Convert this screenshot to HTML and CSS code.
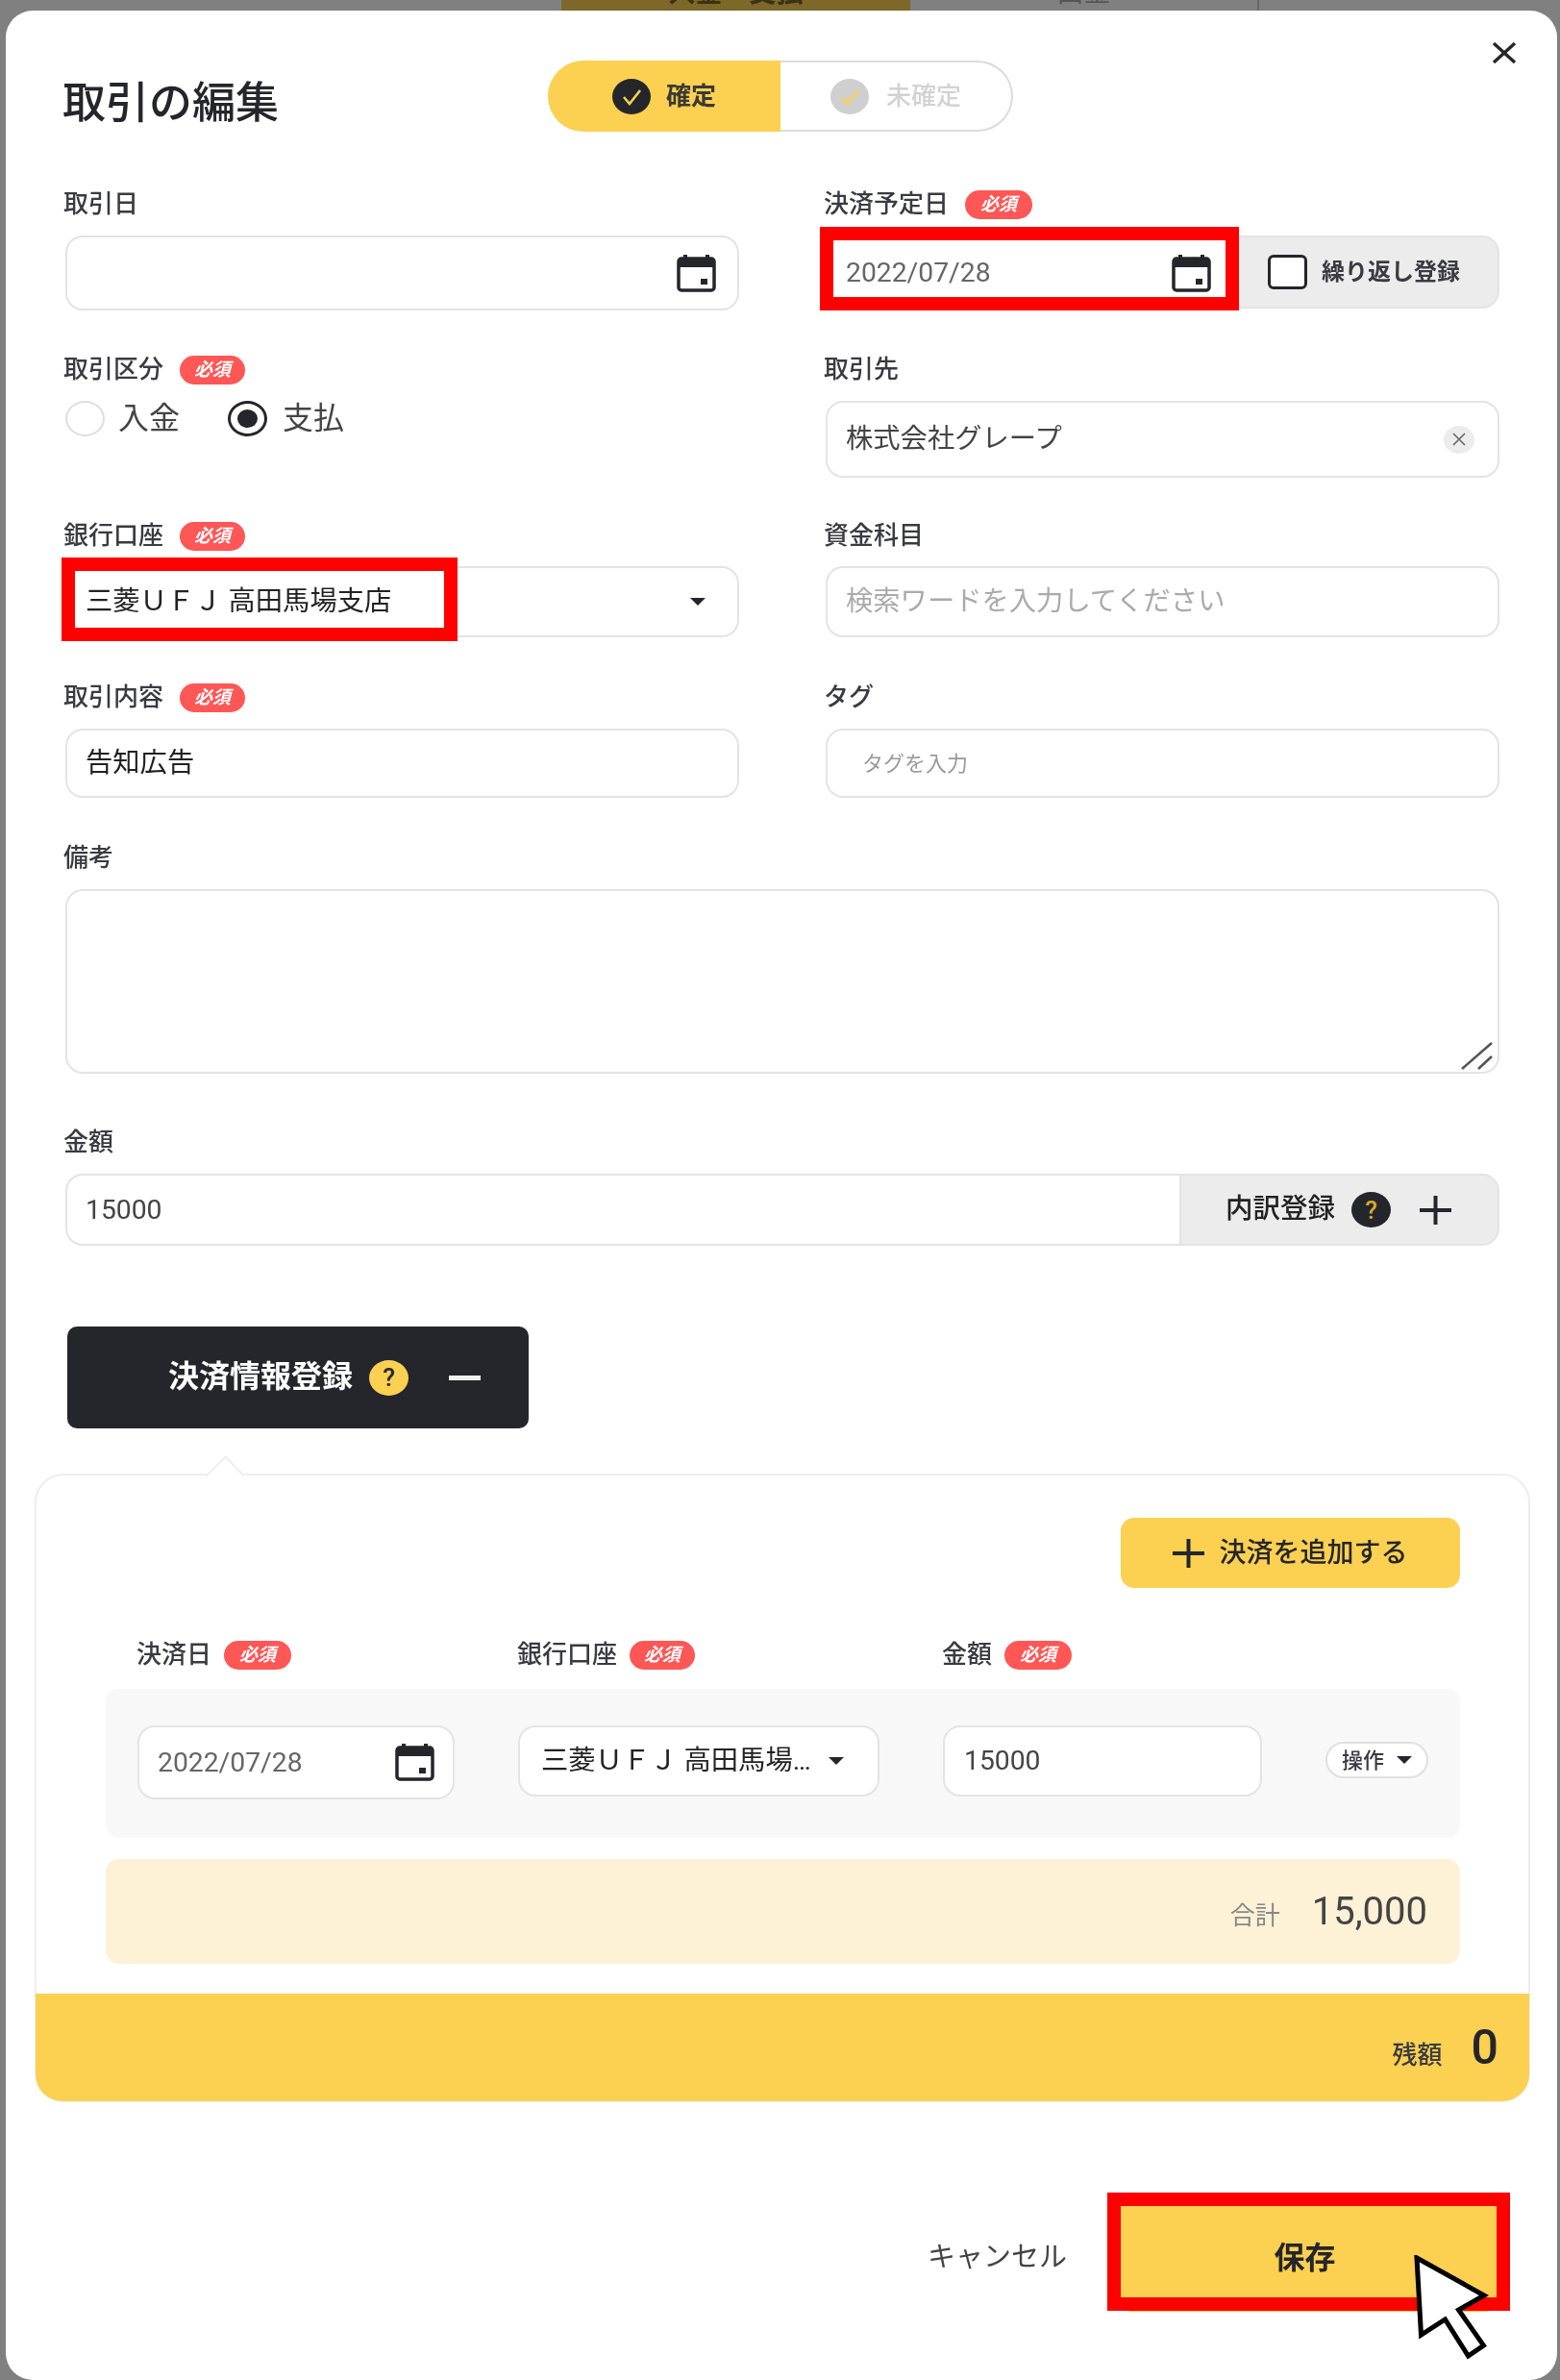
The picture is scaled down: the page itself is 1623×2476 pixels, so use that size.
FILE: index.html
```html
<!DOCTYPE html>
<html lang="ja">
<head>
<meta charset="utf-8">
<title>取引の編集</title>
<link rel="stylesheet" href="styles.css">
</head>
<body>
<svg class="sprite" aria-hidden="true">
  <symbol id="cal" viewBox="0 0 41 39" preserveAspectRatio="none">
    <path d="M7 0h4v5H7zM30 0h4v5h-4z" fill="#25262b"/>
    <rect x="2" y="4" width="37" height="33" rx="3" fill="none" stroke="#25262b" stroke-width="3.5"/>
    <rect x="2" y="4" width="37" height="9" fill="#25262b"/>
    <rect x="25" y="25" width="7" height="6" fill="#25262b"/>
  </symbol>
  <symbol id="check" viewBox="0 0 40 37" preserveAspectRatio="none">
    <path d="M12 19l6 7 11-14" fill="none" stroke="currentColor" stroke-width="2.6"/>
  </symbol>
  <symbol id="plus" viewBox="0 0 33 30" preserveAspectRatio="none">
    <path d="M14.5 0h4v13H33v4H18.500v13h-4V17H0v-4h14.500z" fill="#25262b"/>
  </symbol>
</svg>

<div class="strip">
  <div class="strip-tab"><span class="strip-text">入金・支払</span></div>
  <div class="strip-other"><span class="strip-text">出金</span></div>
</div>

<main class="modal">
  <svg class="close" viewBox="0 0 26 22" preserveAspectRatio="none"><path d="M2 1l22 20M24 1L2 21" fill="none" stroke="#25262b" stroke-width="3.4"/></svg>

  <header class="head">
    <h1 class="title">取引の編集</h1>
    <div class="toggle">
      <div class="toggle-on">
        <span class="tick tick-on"><svg class="tick-svg"><use href="#check"/></svg></span>
        <span class="toggle-text">確定</span>
      </div>
      <div class="toggle-off">
        <span class="tick tick-off"><svg class="tick-svg"><use href="#check"/></svg></span>
        <span class="toggle-text toggle-text-off">未確定</span>
      </div>
    </div>
  </header>

  <div class="row row-1">
    <div class="field">
      <div class="label">取引日</div>
      <div class="box box-78"><span class="grow"></span><svg class="cal cal-wide"><use href="#cal"/></svg></div>
    </div>
    <div class="field">
      <div class="label">決済予定日<span class="req req-wide">必須</span></div>
      <div class="joined">
        <div class="box box-78 box-date">
          <span class="grow val-gray">2022/07/28</span><svg class="cal"><use href="#cal"/></svg>
          <span class="mark mark-date"></span>
        </div>
        <div class="repeat"><span class="checkbox"></span><span class="repeat-text">繰り返し登録</span></div>
      </div>
    </div>
  </div>

  <div class="row row-2">
    <div class="field">
      <div class="label">取引区分<span class="req">必須</span></div>
      <div class="radios">
        <span class="radio"></span><span class="radio-text">入金</span>
        <span class="radio radio-on"></span><span class="radio-text">支払</span>
      </div>
    </div>
    <div class="field">
      <div class="label">取引先</div>
      <div class="box box-80">
        <span class="grow val-dim">株式会社グレープ</span>
        <span class="clear"><svg class="clear-x" viewBox="0 0 14 14"><path d="M1 1l12 12M13 1L1 13" fill="none" stroke="#666" stroke-width="1.6"/></svg></span>
      </div>
    </div>
  </div>

  <div class="row row-3">
    <div class="field">
      <div class="label">銀行口座<span class="req">必須</span></div>
      <div class="box box-74 box-bank">
        <span class="grow val-dark">三菱ＵＦＪ 高田馬場支店</span><span class="caret"></span>
        <span class="mark mark-bank"></span>
      </div>
    </div>
    <div class="field">
      <div class="label">資金科目</div>
      <div class="box box-74"><span class="grow val-ph">検索ワードを入力してください</span></div>
    </div>
  </div>

  <div class="row row-4">
    <div class="field">
      <div class="label">取引内容<span class="req">必須</span></div>
      <div class="box box-72"><span class="grow val-dark">告知広告</span></div>
    </div>
    <div class="field">
      <div class="label">タグ</div>
      <div class="box box-72 box-tag"><span class="grow val-tag">タグを入力</span></div>
    </div>
  </div>

  <div class="row-full row-5">
    <div class="label">備考</div>
    <div class="notes">
      <svg class="resize" viewBox="0 0 33 29"><path d="M1 28L32 1M18 28L32 15" fill="none" stroke="#555" stroke-width="2.6"/></svg>
    </div>
  </div>

  <div class="row-full row-6">
    <div class="label">金額</div>
    <div class="joined joined-amount">
      <div class="box box-75 box-amount"><span class="grow val-dim">15000</span></div>
      <div class="detail">
        <span class="detail-text">内訳登録</span>
        <span class="help help-dark">?</span>
        <svg class="plus"><use href="#plus"/></svg>
      </div>
    </div>
  </div>

  <div class="pay-btn">
    <span class="pay-text">決済情報登録</span>
    <span class="help help-yellow">?</span>
    <span class="minus"></span>
  </div>

  <section class="panel">
    <div class="panel-body">
      <div class="add-row">
        <div class="add-btn"><svg class="plus"><use href="#plus"/></svg><span class="add-text">決済を追加する</span></div>
      </div>
      <div class="pay-grid pay-head">
        <div class="label">決済日<span class="req req-wide req-near">必須</span></div>
        <div class="label">銀行口座<span class="req req-near">必須</span></div>
        <div class="label">金額<span class="req req-wide req-near">必須</span></div>
        <div></div>
      </div>
      <div class="pay-grid pay-row">
        <div class="box box-77 box-date-small"><span class="grow val-gray">2022/07/28</span><svg class="cal"><use href="#cal"/></svg></div>
        <div class="box box-74 box-select-small"><span class="grow val-dark">三菱ＵＦＪ 高田馬場…</span><span class="caret"></span></div>
        <div class="box box-74 box-amount-small"><span class="grow val-dim">15000</span></div>
        <div class="ops"><span class="ops-text">操作</span><span class="caret"></span></div>
      </div>
      <div class="total">
        <span class="total-label">合計</span><span class="total-value">15,000</span>
      </div>
    </div>
    <div class="balance">
      <span class="balance-label">残額</span><span class="balance-value">0</span>
    </div>
  </section>

  <footer class="foot">
    <span class="cancel">キャンセル</span>
    <div class="save"><span class="save-text">保存</span><span class="mark mark-save"></span>
      <svg class="cursor" viewBox="0 0 80 110"><path d="M3 3L73 42 46.500 57 72.500 94 56.500 105 32.500 67 7.500 83z" fill="#fff" stroke="#000" stroke-width="5"/></svg>
    </div>
  </footer>
</main>
</body>
</html>
```

FILE: styles.css
```css
* { box-sizing: border-box; }
html, body { margin: 0; padding: 0; }
body {
  width: 1623px;
  height: 2476px;
  overflow: hidden;
  background: #808080;
  font-family: Roboto, "Noto Sans CJK JP", sans-serif;
  color: #25262b;
  position: relative;
}
.sprite { position: absolute; width: 0; height: 0; }

/* the screenshot is an enlarged capture: its text is slightly soft */
.title, .label, .grow, .toggle-text, .repeat-text, .radio-text, .detail-text,
.pay-text, .add-text, .ops-text, .total-label, .total-value, .balance-label,
.balance-value, .cancel, .save-text, .strip-text { filter: blur(.5px); }

.strip { height: 11px; display: flex; overflow: hidden; padding-left: 584px; }
.strip-tab { width: 363px; height: 11px; background: #7d6729; text-align: center; }
.strip-other { width: 363px; height: 11px; border-right: 2px solid #666; text-align: center; }
.strip-text { display: block; font-size: 28px; line-height: 28px; margin-top: -21px; font-weight: 700; color: #3b3215; }
.strip-other .strip-text { color: #555; font-weight: 400; }

.modal {
  position: relative;
  width: 1614px;
  height: 2465px;
  margin-left: 6px;
  background: #fff;
  border-radius: 28px;
  padding: 52px 60px 0 62px;
}
.close { position: absolute; left: 1546px; top: 33px; width: 26px; height: 22px; }

.head { display: flex; align-items: flex-start; height: 74px; }
.title { margin: 0 3px 0 -3px; width: 502px; padding-top: 23px; font-size: 45px; line-height: 44px; font-weight: 500; color: #25262b; white-space: nowrap; }
.toggle { display: flex; width: 484px; height: 74px; }
.toggle-on, .toggle-off { display: flex; align-items: center; justify-content: center; }
.toggle-on { width: 242px; background: #fcd051; border-radius: 37px 0 0 37px; gap: 16px; }
.toggle-off { width: 242px; background: #fff; border: 2px solid #dcdcdc; border-left: 0; border-radius: 0 37px 37px 0; gap: 18px; }
.tick { width: 40px; height: 37px; border-radius: 50%; display: block; color: #fcd051; }
.tick-on { background: #25262b; }
.tick-off { background: #cfcfcf; }
.tick-svg { width: 40px; height: 37px; display: block; }
.toggle-text { font-size: 26px; line-height: 30px; font-weight: 700; color: #3a3a34; }
.toggle-text-off { color: #d2d2d2; font-weight: 500; }

.row { display: grid; grid-template-columns: 701px 701px; column-gap: 90px; }
.row-1 { margin-top: 59px; }
.row-2 { margin-top: 45px; }
.row-3 { margin-top: 44px; }
.row-4 { margin-top: 46px; }
.row-5 { margin-top: 46px; }
.row-6 { margin-top: 55px; }

.label { height: 30px; margin-bottom: 19px; margin-left: -2px; padding-top: 3px; font-size: 26px; line-height: 27px; font-weight: 500; color: #3a3b40; display: flex; align-items: center; white-space: nowrap; }
.row-3 .label { margin-bottom: 18px; }
.req { display: inline-block; flex: none; width: 68px; height: 30px; margin-left: 17px; margin-top: 1px; border-radius: 15px; background: #ff5656; color: #fff; font-size: 19px; line-height: 29px; font-weight: 700; font-style: italic; text-align: center; }
.req-wide { width: 70px; }
.req-near { margin-left: 13px; }

.box { position: relative; display: flex; align-items: center; background: #fff; border: 2px solid #e4e4e4; border-radius: 18px; padding: 0 20px; }
.box-72 { height: 72px; }
.box-74 { height: 74px; }
.box-75 { height: 75px; }
.box-77 { height: 77px; }
.box-78 { height: 78px; }
.box-80 { height: 80px; }
.grow { flex: 1; min-width: 0; font-size: 28.300px; line-height: 34px; white-space: nowrap; margin-left: -1px; }
.val-gray { color: #666; }
.val-dim { color: #444; }
.val-dark { color: #222; }
.val-ph { color: #aaa; }
.val-tag { color: #999; font-size: 22px; padding-left: 17px; padding-top: 2px; }
.cal { width: 41px; height: 39px; display: block; flex: none; }
.cal-wide { margin-right: 2px; }
.box-date .cal { margin-right: 9px; }
.caret { flex: none; width: 0; height: 0; border-left: 8px solid transparent; border-right: 8px solid transparent; border-top: 8px solid #25262b; }
.box-bank .caret { margin-right: 13px; }
.box-select-small .caret { margin-right: 27px; margin-left: 4px; }

.mark { position: absolute; border: 14px solid #f00; pointer-events: none; }
.mark-date { left: -8px; top: -11px; width: 436px; height: 87px; }
.mark-bank { left: -6px; top: -11px; width: 412px; height: 87px; }

.joined { display: flex; }
.box-date { width: 430px; border-radius: 18px 0 0 18px; border-right: 0; }
.repeat { flex: 1; height: 76px; display: flex; align-items: center; background: #ececec; border: 2px solid #e4e4e4; border-left: 0; border-radius: 0 18px 18px 0; padding-left: 30px; gap: 15px; }
.checkbox { width: 41px; height: 36px; border: 3px solid #25262b; border-radius: 6px; background: #fff; display: block; }
.repeat-text { font-size: 24px; line-height: 30px; font-weight: 700; color: #3a3b40; }

.radios { display: flex; align-items: center; height: 37px; margin-top: 1px; }
.radio { width: 41px; height: 37px; border-radius: 50%; border: 2px solid #dedede; display: block; background: #fff; }
.radio-on { border: 3px solid #25262b; position: relative; margin-left: 50px; }
.radio-on::after { content: ""; position: absolute; left: 7px; top: 6px; width: 21px; height: 19px; border-radius: 50%; background: #25262b; }
.radio-text { font-size: 32px; line-height: 37px; color: #444; margin-left: 14px; }
.radio-on + .radio-text { margin-left: 16px; }

.clear { flex: none; width: 32px; height: 29px; border-radius: 50%; background: #ececec; display: flex; align-items: center; justify-content: center; margin-right: 4px; }
.clear-x { width: 14px; height: 14px; display: block; }

.notes { position: relative; height: 192px; border: 2px solid #e4e4e4; border-radius: 18px; background: #fff; }
.resize { position: absolute; right: 5px; bottom: 2px; width: 33px; height: 29px; }

.joined-amount { width: 1492px; }
.box-amount { width: 1159px; border-radius: 18px 0 0 18px; border-right: 0; }
.detail { flex: 1; height: 75px; display: flex; align-items: center; background: #ececec; border: 2px solid #e4e4e4; border-radius: 0 18px 18px 0; padding-left: 46px; }
.detail-text { font-size: 28.500px; line-height: 34px; font-weight: 500; color: #222; margin-top: -2px; }
.help { width: 41px; height: 37px; border-radius: 50%; display: flex; align-items: center; justify-content: center; font-size: 26px; font-weight: 500; flex: none; }
.help-dark { background: #25262b; color: #d6a92f; margin-left: 17px; }
.help-yellow { background: #fcd051; color: #25262b; }
.plus { width: 33px; height: 30px; display: block; flex: none; }
.detail .plus { margin-left: 30px; }

.pay-btn { display: flex; align-items: center; width: 480px; height: 106px; margin-top: 84px; margin-left: 2px; background: #25262b; border-radius: 10px; padding-left: 105px; }
.pay-text { font-size: 32px; line-height: 40px; font-weight: 700; color: #fff; white-space: nowrap; margin-top: -2px; }
.pay-btn .help { margin-left: 17px; }
.minus { width: 33px; height: 5px; background: #f2f2f2; margin-left: 42px; display: block; }

.panel { position: relative; width: 1556px; height: 654px; margin-top: 47px; margin-left: -32px; border: 2px solid #eee; border-radius: 30px; background: #fff; display: flex; flex-direction: column; }
.panel::before { content: ""; position: absolute; left: 181px; top: -15px; width: 28px; height: 28px; background: #fff; border-left: 2px solid #eee; border-top: 2px solid #eee; transform: rotate(45deg) scaleX(.95); }
.panel-body { flex: 1; padding: 44px 71px 0 72px; position: relative; }
.add-row { display: flex; justify-content: flex-end; }
.add-btn { display: flex; align-items: center; justify-content: center; gap: 15px; width: 353px; height: 73px; background: #fcd051; border-radius: 14px; font-size: 28px; line-height: 34px; font-weight: 500; color: #25262b; }
.pay-grid { display: grid; grid-template-columns: 330px 376px 332px 107px; column-gap: 66px; padding: 0 33px; }
.pay-head { margin-top: 53px; }
.pay-head .label { margin-bottom: 0; margin-left: -1px; }
.pay-row { margin-top: 22px; height: 155px; padding-top: 38px; align-items: start; background: #f8f8f8; border-radius: 14px; }
.box-select-small { padding-left: 23px; padding-right: 8px; }
.box-amount-small { padding-left: 21px; }
.box-date-small .cal { margin-right: -1px; }
.ops { display: flex; align-items: center; justify-content: center; gap: 13px; height: 38px; margin-top: 17px; background: #fff; border: 2px solid #e0e0e0; border-radius: 19px; }
.ops-text { font-size: 22px; line-height: 28px; font-weight: 500; color: #3a3b40; padding-top: 2px; }
.total { display: flex; align-items: center; justify-content: flex-end; height: 109px; margin-top: 22px; padding-right: 34px; background: #fdf1d6; border-radius: 14px; }
.total-label { font-size: 26px; color: #888; margin-right: 33px; padding-top: 4px; }
.total-value { font-size: 40px; line-height: 44px; color: #444; }

.balance { height: 112px; margin: 0 -1px -1px; display: flex; align-items: center; justify-content: flex-end; background: #fcd051; border-radius: 0 0 28px 28px; padding-right: 32px; }
.balance-label { font-size: 26px; font-weight: 500; color: #3a3b40; padding-top: 10px; margin-right: 30px; }
.balance-value { font-size: 50px; line-height: 50px; font-weight: 500; color: #25262b; }

.foot { display: flex; justify-content: flex-end; align-items: flex-start; margin-top: 103px; width: 1489px; }
.cancel { font-size: 29px; line-height: 36px; color: #444; margin-right: 56px; margin-top: 40px; }
.save { position: relative; width: 391px; height: 115px; background: #fcd051; border-radius: 0 0 10px 10px; text-align: center; color: #25262b; }
.save-text { display: block; padding-right: 8px; padding-top: 2px; font-size: 32px; line-height: 115px; font-weight: 700; }
.mark-save { left: -14px; top: -9px; width: 419px; height: 123px; }
.cursor { position: absolute; left: 305px; top: 56px; width: 80px; height: 110px; }
```
